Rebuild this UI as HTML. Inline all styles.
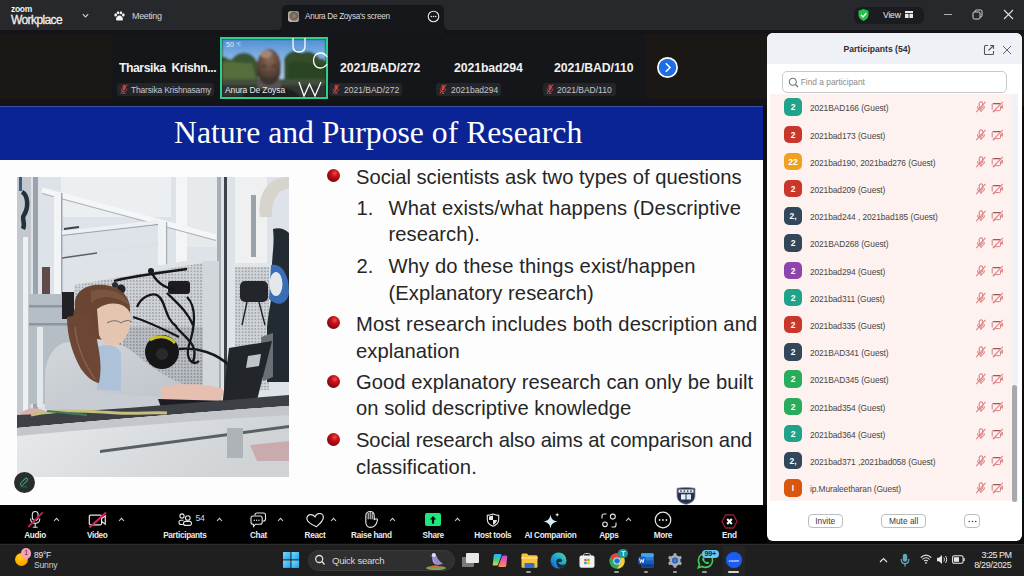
<!DOCTYPE html>
<html><head><meta charset="utf-8">
<style>
*{margin:0;padding:0;box-sizing:border-box}
html,body{width:1024px;height:576px;overflow:hidden;background:#0c0c0c;font-family:"Liberation Sans",sans-serif}
.a{position:absolute}
.nw{white-space:nowrap}
</style></head>
<body>
<!-- top bar -->
<div class="a" style="left:0;top:0;width:1024px;height:30px;background:#27282c"></div>
<div class="a" style="left:0;top:30px;width:1024px;height:5px;background:#141418"></div>
<!-- strip -->
<div class="a" style="left:0;top:34px;width:1024px;height:72px;background:#1b1714"></div>
<div class="a" style="left:112px;top:34px;width:534px;height:72px;background:#15161a"></div>
<div class="a" style="left:0;top:99px;width:767px;height:7px;background:#131417"></div>


<!-- top bar content -->
<div class="a nw" style="left:11px;top:4px;font-size:8.5px;font-weight:bold;color:#f2f2f2;letter-spacing:-0.3px">zoom</div>
<div class="a nw" style="left:11px;top:13px;font-size:12px;color:#f0f0f0;letter-spacing:-0.6px;-webkit-text-stroke:0.3px #f0f0f0">Workplace</div>
<svg class="a" style="left:81px;top:12px" width="9" height="8" viewBox="0 0 9 8"><path d="M1.8 2.2 L4.5 4.9 L7.2 2.2" stroke="#d0d0d0" stroke-width="1.1" fill="none"/></svg>
<svg class="a" style="left:114px;top:10.5px" width="11" height="10.5" viewBox="0 0 13 12"><g fill="#f4f4f4"><ellipse cx="2" cy="4.5" rx="1.6" ry="1.9"/><ellipse cx="4.8" cy="1.9" rx="1.5" ry="1.8"/><ellipse cx="8.2" cy="1.9" rx="1.5" ry="1.8"/><ellipse cx="11" cy="4.5" rx="1.6" ry="1.9"/><path d="M6.5 5 C9 5 11 8 10.5 10 C10 11.5 8 11 6.5 11 C5 11 3 11.5 2.5 10 C2 8 4 5 6.5 5Z"/></g></svg>
<div class="a nw" style="left:132px;top:11px;font-size:9px;color:#d6d6d6;letter-spacing:-0.35px">Meeting</div>
<!-- tab -->
<div class="a" style="left:282px;top:5px;width:162px;height:30px;background:#16171a;border-radius:5px 5px 0 0"></div>
<div class="a" style="left:276px;top:24px;width:6px;height:6px;background:radial-gradient(circle at 0 0,#27282c 6px,#16171a 6.5px)"></div>
<div class="a" style="left:444px;top:24px;width:6px;height:6px;background:radial-gradient(circle at 100% 0,#27282c 6px,#16171a 6.5px)"></div>
<div class="a" style="left:288px;top:11px;width:11px;height:11px;border-radius:3px;background:radial-gradient(circle at 55% 45%,#9b8a7c 0,#6b5d52 40%,#cfc6bd 75%)"></div>
<div class="a nw" style="left:305px;top:12px;font-size:8.2px;color:#dcdcdc;letter-spacing:-0.3px">Anura De Zoysa's screen</div>
<svg class="a" style="left:427px;top:10px" width="13" height="13" viewBox="0 0 13 13"><circle cx="6.5" cy="6.5" r="5.3" stroke="#e6e6e6" stroke-width="1.1" fill="none"/><circle cx="4.3" cy="6.5" r=".8" fill="#e6e6e6"/><circle cx="6.5" cy="6.5" r=".8" fill="#e6e6e6"/><circle cx="8.7" cy="6.5" r=".8" fill="#e6e6e6"/></svg>
<!-- view pill -->
<div class="a" style="left:854px;top:7px;width:70px;height:17px;border-radius:6px;background:#1b1c1f"></div>
<svg class="a" style="left:857px;top:8px" width="13" height="14" viewBox="0 0 13 14"><path d="M6.5 1 L11.5 2.8 L11.5 7 C11.5 10 9 12 6.5 13 C4 12 1.5 10 1.5 7 L1.5 2.8Z" fill="#22c147"/><path d="M4 7 L6 9 L9.2 5.2" stroke="#fff" stroke-width="1.4" fill="none"/></svg>
<div class="a nw" style="left:883px;top:10px;font-size:8.6px;color:#e8e8e8;letter-spacing:-0.2px">View</div>
<svg class="a" style="left:905px;top:11px" width="8" height="7" viewBox="0 0 8 7"><rect x="0" y="0" width="8" height="7" fill="#e8e8e8"/><rect x="0" y="2" width="8" height=".8" fill="#1b1c1f"/><rect x="3.6" y="2" width=".8" height="5" fill="#1b1c1f"/></svg>
<div class="a" style="left:943.5px;top:14px;width:8px;height:1px;background:#b0b0b0"></div>
<svg class="a" style="left:972px;top:9px" width="11" height="11" viewBox="0 0 11 11"><rect x="1" y="3" width="7" height="7" rx="1.2" stroke="#d8d8d8" stroke-width="1" fill="none"/><path d="M3 3 V2.2 C3 1.5 3.5 1 4.2 1 H8.8 C9.5 1 10 1.5 10 2.2 V6.8 C10 7.5 9.5 8 8.8 8 H8" stroke="#d8d8d8" stroke-width="1" fill="none"/></svg>
<svg class="a" style="left:1003px;top:9px" width="11" height="11" viewBox="0 0 11 11"><path d="M1 1 L10 10 M10 1 L1 10" stroke="#e0e0e0" stroke-width="1.1"/></svg>


<!-- strip content -->
<div class="a nw" style="left:119px;top:61px;font-size:12.3px;font-weight:bold;color:#f0f0f0;letter-spacing:-0.5px">Tharsika&nbsp; Krishn...</div>
<div class="a" style="left:117px;top:83px;width:97px;height:13px;border-radius:3px;background:#242528"></div>
<svg class="a" style="left:120px;top:84px" width="8" height="10" viewBox="0 0 8 10"><rect x="2.5" y="0.5" width="3" height="5.5" rx="1.5" fill="#c03a3a"/><path d="M1.2 4.5 C1.2 6.8 2.5 7.8 4 7.8 C5.5 7.8 6.8 6.8 6.8 4.5 M4 7.8 V9.5 M2.5 9.5 H5.5" stroke="#c03a3a" stroke-width=".9" fill="none"/><path d="M7 0.5 L1 9.5" stroke="#e05050" stroke-width="1"/></svg>
<div class="a nw" style="left:131px;top:85px;font-size:8.5px;color:#c8c8c8;letter-spacing:-0.2px">Tharsika Krishnasamy</div>

<div class="a nw" style="left:340px;top:61px;font-size:12.3px;font-weight:bold;color:#f0f0f0;letter-spacing:-0.1px">2021/BAD/272</div>
<div class="a" style="left:329px;top:83px;width:73px;height:13px;border-radius:3px;background:#242528"></div>
<svg class="a" style="left:332px;top:84px" width="8" height="10" viewBox="0 0 8 10"><rect x="2.5" y="0.5" width="3" height="5.5" rx="1.5" fill="#c03a3a"/><path d="M1.2 4.5 C1.2 6.8 2.5 7.8 4 7.8 C5.5 7.8 6.8 6.8 6.8 4.5 M4 7.8 V9.5 M2.5 9.5 H5.5" stroke="#c03a3a" stroke-width=".9" fill="none"/><path d="M7 0.5 L1 9.5" stroke="#e05050" stroke-width="1"/></svg>
<div class="a nw" style="left:344px;top:85px;font-size:8.5px;color:#c8c8c8">2021/BAD/272</div>

<div class="a nw" style="left:454px;top:61px;font-size:12.3px;font-weight:bold;color:#f0f0f0;letter-spacing:-0.1px">2021bad294</div>
<div class="a" style="left:436px;top:83px;width:65px;height:13px;border-radius:3px;background:#242528"></div>
<svg class="a" style="left:439px;top:84px" width="8" height="10" viewBox="0 0 8 10"><rect x="2.5" y="0.5" width="3" height="5.5" rx="1.5" fill="#c03a3a"/><path d="M1.2 4.5 C1.2 6.8 2.5 7.8 4 7.8 C5.5 7.8 6.8 6.8 6.8 4.5 M4 7.8 V9.5 M2.5 9.5 H5.5" stroke="#c03a3a" stroke-width=".9" fill="none"/><path d="M7 0.5 L1 9.5" stroke="#e05050" stroke-width="1"/></svg>
<div class="a nw" style="left:451px;top:85px;font-size:8.5px;color:#c8c8c8">2021bad294</div>

<div class="a nw" style="left:554px;top:61px;font-size:12.3px;font-weight:bold;color:#f0f0f0;letter-spacing:-0.1px">2021/BAD/110</div>
<div class="a" style="left:543px;top:83px;width:73px;height:13px;border-radius:3px;background:#242528"></div>
<svg class="a" style="left:546px;top:84px" width="8" height="10" viewBox="0 0 8 10"><rect x="2.5" y="0.5" width="3" height="5.5" rx="1.5" fill="#c03a3a"/><path d="M1.2 4.5 C1.2 6.8 2.5 7.8 4 7.8 C5.5 7.8 6.8 6.8 6.8 4.5 M4 7.8 V9.5 M2.5 9.5 H5.5" stroke="#c03a3a" stroke-width=".9" fill="none"/><path d="M7 0.5 L1 9.5" stroke="#e05050" stroke-width="1"/></svg>
<div class="a nw" style="left:557px;top:85px;font-size:8.5px;color:#c8c8c8">2021/BAD/110</div>

<svg class="a" style="left:656px;top:56px" width="23" height="23" viewBox="0 0 23 23"><circle cx="11.5" cy="11.5" r="10.5" fill="#fff"/><circle cx="11.5" cy="11.5" r="8.8" fill="#1b6fe6"/><path d="M9.8 7.2 L14 11.5 L9.8 15.8" stroke="#fff" stroke-width="1.6" fill="none"/></svg>

<!-- video thumb -->
<div class="a" style="left:220px;top:37px;width:108px;height:62px;border:2px solid #2ecf8a;background:#16181b"></div>
<svg class="a" style="left:222px;top:39px" width="104" height="58" viewBox="0 0 104 58">
 <defs><linearGradient id="sky" x1="0" y1="0" x2="0" y2="1"><stop offset="0" stop-color="#4f8fd6"/><stop offset=".45" stop-color="#9cc2e8"/><stop offset="1" stop-color="#d5dde2"/></linearGradient>
 <filter id="tb"><feGaussianBlur stdDeviation="0.8"/></filter>
 <radialGradient id="head" cx=".5" cy=".3" r=".7"><stop offset="0" stop-color="#8a6a5a"/><stop offset=".6" stop-color="#5e4538"/><stop offset="1" stop-color="#3e2e28"/></radialGradient></defs>
 <g filter="url(#tb)">
 <rect width="104" height="58" fill="url(#sky)"/>
 <path d="M0 18 C4 16 6 22 10 20 C16 12 26 12 32 18 L36 24 L36 58 H0Z" fill="#3b5530"/>
 <path d="M62 20 C66 12 74 10 80 14 C86 10 94 14 98 20 C102 18 104 22 104 24 V58 H62Z" fill="#344d2a"/>
 <path d="M0 24 C10 20 20 26 30 24 L34 40 H0Z" fill="#546e3a"/>
 <path d="M66 24 C76 20 90 26 104 26 V44 H66Z" fill="#2c4424"/>
 <path d="M0 40 H104 V58 H0Z" fill="#43503c"/>
 <path d="M0 46 H104 V58 H0Z" fill="#2f3530"/>
 <ellipse cx="47" cy="27" rx="12" ry="17" fill="url(#head)"/>
 <ellipse cx="44" cy="15" rx="6" ry="4" fill="#b89a88" opacity=".7"/>
 <path d="M35 30 C35 40 40 47 47 47 C54 47 59 40 59 30 C57 37 52 39 47 39 C42 39 37 37 35 30Z" fill="#3a3432"/>
 <path d="M37 38 C40 49 54 49 57 38 L59 48 C55 55 39 55 35 48Z" fill="#5a5552"/>
 <path d="M40 27 H45 M49 27 H54" stroke="#2a2220" stroke-width="1.2"/>
 <path d="M20 58 C24 50 34 48 40 50 L54 50 C62 48 72 50 78 58Z" fill="#1d1e22"/>
 </g>
</svg>
<div class="a nw" style="left:226px;top:41px;font-size:7px;color:#e8eef6">50 <span style="font-size:5px;vertical-align:top">&#8451;</span></div>
<div class="a nw" style="left:225px;top:85px;font-size:8.5px;color:#eaeaea;letter-spacing:-0.1px">Anura De Zoysa</div>
<svg class="a" style="left:288px;top:36px" width="42" height="62" viewBox="0 0 42 62">
 <path d="M5 2 V10 C5 14.5 7.5 16 11 16 C14.5 16 17 14.5 17 10 V2" stroke="#fff" stroke-width="1.3" fill="none"/>
 <path d="M39 21 C37 17.5 35 17 32.5 17 C28.5 17 25.5 20 25.5 24.5 C25.5 29 28.5 32 32.5 32 C35 32 37 31 39 28" stroke="#fff" stroke-width="1.3" fill="none"/>
 <path d="M11 46 L16 60 L21.5 48 L27 60 L33 46" stroke="#fff" stroke-width="1.3" fill="none"/>
</svg>

<!-- slide -->
<div id="slide" class="a" style="left:0;top:106px;width:763px;height:399px;background:#fdfdfd;overflow:hidden">
  <div class="a" style="left:0;top:0;width:763px;height:54px;background:#0a2496"></div>
<div class="a" style="left:0;top:0;width:763px;height:1px;background:#3f4fa6"></div>
<div class="a nw" style="left:174px;top:9px;font-family:'Liberation Serif',serif;font-size:31.7px;color:#fff;line-height:36px">Nature and Purpose of Research</div>
<svg id="photo" class="a" style="left:17px;top:71px" width="272" height="300" viewBox="0 0 272 300">
<defs>
<filter id="bl" x="-2%" y="-2%" width="104%" height="104%"><feGaussianBlur stdDeviation="0.7"/></filter>
<pattern id="peg" width="3.2" height="3.2" patternUnits="userSpaceOnUse"><rect width="3.2" height="3.2" fill="#cfd3d7"/><circle cx="1.6" cy="1.6" r=".8" fill="#8f949a"/></pattern>
<pattern id="peg2" width="3.2" height="3.2" patternUnits="userSpaceOnUse"><rect width="3.2" height="3.2" fill="#b9bdc2"/><circle cx="1.6" cy="1.6" r=".8" fill="#7c8187"/></pattern>
<linearGradient id="floor" x1="0" y1="0" x2="1" y2=".3"><stop offset="0" stop-color="#e9ebed"/><stop offset=".5" stop-color="#dcdfe2"/><stop offset="1" stop-color="#cfd3d6"/></linearGradient>
<linearGradient id="shirt" x1="0" y1="0" x2="1" y2="1"><stop offset="0" stop-color="#d3d7dc"/><stop offset="1" stop-color="#bdc2c8"/></linearGradient>
</defs>
<g filter="url(#bl)">
<rect width="272" height="300" fill="#dde3e8"/>
<rect x="44" y="0" width="110" height="40" fill="#eceff2"/>
<rect x="159" y="0" width="11" height="88" fill="#f3f5f6"/>
<rect x="170" y="0" width="30" height="70" fill="#e6eaed"/>
<!-- left dark items -->
<rect x="0" y="0" width="14" height="300" fill="#c3c9cf"/>
<path d="M5 15 C11 18 12 30 7 38 C4 42 9 46 6 52" stroke="#24303a" stroke-width="4.5" fill="none"/>
<rect x="2" y="0" width="3" height="14" fill="#3d5a7a"/>
<rect x="16" y="0" width="5" height="240" fill="#9ba4ac"/>
<rect x="6" y="60" width="5" height="175" fill="#eef0f2"/>
<!-- framework box -->
<path d="M25 13 L199 60" stroke="#f4f6f7" stroke-width="5"/>
<path d="M25 16.5 L199 63.5" stroke="#a9b0b6" stroke-width="1"/>
<rect x="37" y="16" width="7" height="102" fill="#f2f4f5"/>
<rect x="44" y="16" width="1.5" height="102" fill="#9ea6ad"/>
<path d="M45 56 L141 45" stroke="#edf0f2" stroke-width="4"/>
<path d="M45 58.5 L141 47.5" stroke="#9ba2a9" stroke-width="1"/>
<path d="M45 80 L141 67" stroke="#dde1e4" stroke-width="3"/>
<path d="M45 81 L80 76" stroke="#5a6168" stroke-width="1.3"/>
<path d="M47 52 L62 50" stroke="#3a4047" stroke-width="2"/>
<rect x="141" y="45" width="8" height="43" fill="#f0f2f4"/>
<rect x="149" y="45" width="1.2" height="43" fill="#a5acb3"/>
<rect x="25" y="90" width="8" height="27" fill="#5e4a48"/>
<!-- right posts -->
<rect x="200" y="0" width="4" height="240" fill="#a7aeb4"/>
<rect x="207" y="0" width="3" height="240" fill="#3c4248"/>
<rect x="218" y="0" width="32" height="88" fill="#eef0f2"/>
<rect x="234" y="18" width="5" height="62" fill="#9aa2aa"/>
<path d="M243 40 C240 18 250 2 268 0 L272 0 L272 12 C262 12 254 22 255 40Z" fill="#d6d4cc"/>
<!-- left grey panel -->
<rect x="12" y="117" width="45" height="110" fill="#b5bdc5"/>
<rect x="12" y="128" width="45" height="2.5" fill="#8c96a0"/>
<rect x="12" y="146" width="45" height="2.5" fill="#8c96a0"/>
<rect x="45" y="115" width="12" height="27" fill="#202427"/>
<rect x="20" y="150" width="6" height="80" fill="#e4e8eb"/>
<!-- center pegboard -->
<path d="M57 106 L191 82 L191 210 L57 214Z" fill="url(#peg)"/>
<path d="M57 103 L191 80 L191 85 L57 108Z" fill="#dfe3e6"/>
<rect x="186" y="84" width="16" height="130" fill="#d2d7db"/>
<rect x="106" y="150" width="80" height="58" fill="url(#peg2)"/>
<!-- right pegboard -->
<rect x="218" y="88" width="34" height="125" fill="url(#peg)"/>
<rect x="216" y="86" width="38" height="4" fill="#e2e5e8"/>
<!-- cables / devices -->
<rect x="151" y="104" width="22" height="13" rx="3" fill="#1c1e21"/>
<circle cx="104" cy="112" r="4.5" fill="#222427"/>
<circle cx="98" cy="108" r="3" fill="#2a2c2f"/>
<path d="M97 104 C110 100 140 96 170 92 M134 94 C138 104 148 112 158 112 M150 116 C160 126 170 134 176 148 M120 130 C124 120 134 116 140 118 C150 124 146 140 160 150 M170 120 C180 130 178 150 172 168 C168 182 176 190 182 184 M116 140 C130 144 146 152 162 160" stroke="#141619" stroke-width="2.3" fill="none"/>
<circle cx="134" cy="94" r="3" fill="#1a1c1f"/>
<rect x="223" y="104" width="28" height="21" rx="5" fill="#24272a"/>
<path d="M230 125 L225 148 M242 125 L248 148" stroke="#222" stroke-width="1.4"/>
<!-- speaker -->
<circle cx="145" cy="175" r="17" fill="#131517"/>
<path d="M133 163 C141 158 152 159 158 166" stroke="#c9c22c" stroke-width="3" fill="none"/>
<circle cx="145" cy="177" r="6" fill="#2a2c2f"/>
<path d="M159 150 C170 162 182 168 176 185 M162 172 C180 170 200 176 214 190" stroke="#15171a" stroke-width="2.4" fill="none"/>
<!-- robot -->
<path d="M256 52 C262 50 268 52 272 56 L272 205 L250 205 L250 150 C252 130 256 120 255 100 C254 80 258 70 256 52Z" fill="#232a31"/>
<path d="M244 160 L256 156 L256 200 L246 204Z" fill="#6a7076"/>
<path d="M254 88 C264 86 272 96 272 116 C270 128 260 130 252 122Z" fill="#3b6cb6"/>
<ellipse cx="259" cy="107" rx="6.5" ry="12" fill="#e3e8ed"/>
</g>
<g filter="url(#bl)">
<!-- hair -->
<path d="M58 130 C56 114 70 106 88 108 C104 110 114 120 113 134 L106 160 C100 178 92 196 84 204 C74 200 66 188 60 176 C54 160 54 144 58 130Z" fill="#6a4532"/>
<!-- shirt -->
<path d="M28 200 C28 184 34 172 46 166 L74 162 C94 162 108 168 120 178 C138 194 156 204 174 210 L176 226 L140 230 L96 234 L40 234 L28 232Z" fill="url(#shirt)"/>
<path d="M50 214 C80 216 110 218 144 220 L146 234 L50 234Z" fill="#c8cdd3"/>
<path d="M80 170 C90 166 100 168 104 176 L104 214 L80 213Z" fill="#adc2d9"/>
<!-- hair strand over shirt -->
<path d="M50 140 C50 160 56 178 64 192 C70 200 76 205 82 206 C84 196 84 186 82 174 C80 160 76 148 72 136Z" fill="#6d4734"/>
<path d="M58 150 C60 170 68 188 78 202" stroke="#8a6048" stroke-width="1.5" fill="none"/>
<!-- face -->
<path d="M80 132 C90 124 108 124 113 136 C115 146 112 158 104 166 C96 171 86 168 82 158Z" fill="#e5c5b0"/>
<path d="M90 146 C95 143 100 143 104 146 C108 143 112 143 115 145" stroke="#6a6a6a" stroke-width="1" fill="none"/>
<path d="M74 114 C90 110 106 114 113 128 L100 122 C90 118 80 120 74 126Z" fill="#7a5540"/>
<!-- hands -->
<path d="M143 210 C160 206 190 206 206 212 C208 220 202 226 194 226 L146 226Z" fill="#e6bfb1"/>
<path d="M4 236 C10 230 20 230 28 234 L24 242 L4 244Z" fill="#dcb0a6"/>
<!-- laptop -->
<path d="M212 171 L255 164 L239 227 L205 230Z" fill="#24272b"/>
<path d="M231 179 L244 177 L242 189 L229 191Z" fill="#bfc4ca"/>
<path d="M141 222 L212 224 L238 228 L146 236Z" fill="#1c1e21"/>
<!-- table -->
<path d="M0 238 C80 234 170 226 272 218 L272 229 C170 236 80 244 0 251Z" fill="#3c3f44"/>
<path d="M14 238 C40 232 70 234 100 236 C120 237 138 235 150 236" stroke="#c5bf80" stroke-width="3" fill="none"/>
<path d="M30 234 L70 238" stroke="#3f7a5a" stroke-width="2"/>
<path d="M0 251 C80 244 170 236 272 229 L272 300 L0 300Z" fill="url(#floor)"/>
<path d="M0 251 C80 244 170 236 272 229 L272 238 C170 244 80 252 0 259Z" fill="#c3c7cb"/>
<path d="M83 273 L272 248 L272 251 L83 276Z" fill="#5a5f64"/>
<rect x="210" y="251" width="16" height="30" fill="#aeb3b8"/>
<path d="M233 268 L272 264 L272 284 L240 284Z" fill="#c9abae"/>
</g>
</svg>
<div style="color:#262626">
<div class="a" style="left:327px;top:63.0px;width:13px;height:13px;border-radius:50%;background:radial-gradient(circle at 60% 32%,#f04a4a 0,#c81018 30%,#8a0812 65%,#4a0006 100%)"></div>
<div class="a nw" style="left:356px;top:59.8px;font-size:20.2px;line-height:23.2px;letter-spacing:-0.01px">Social scientists ask two types of questions</div>
<div class="a nw" style="left:356.5px;top:91.1px;font-size:20.2px;line-height:23.2px;letter-spacing:0.05px">1.</div>
<div class="a nw" style="left:388.5px;top:91.1px;font-size:20.2px;line-height:23.2px;letter-spacing:0.13px">What exists/what happens (Descriptive</div>
<div class="a nw" style="left:388.5px;top:117.4px;font-size:20.2px;line-height:23.2px;letter-spacing:0.05px">research).</div>
<div class="a nw" style="left:356.5px;top:149.1px;font-size:20.2px;line-height:23.2px;letter-spacing:0.05px">2.</div>
<div class="a nw" style="left:388.5px;top:149.1px;font-size:20.2px;line-height:23.2px;letter-spacing:0.13px">Why do these things exist/happen</div>
<div class="a nw" style="left:388.5px;top:176.1px;font-size:20.2px;line-height:23.2px;letter-spacing:0.05px">(Explanatory research)</div>
<div class="a" style="left:327px;top:210.2px;width:13px;height:13px;border-radius:50%;background:radial-gradient(circle at 60% 32%,#f04a4a 0,#c81018 30%,#8a0812 65%,#4a0006 100%)"></div>
<div class="a nw" style="left:356px;top:206.9px;font-size:20.2px;line-height:23.2px;letter-spacing:0.15px">Most research includes both description and</div>
<div class="a nw" style="left:356px;top:233.9px;font-size:20.2px;line-height:23.2px;letter-spacing:0.05px">explanation</div>
<div class="a" style="left:327px;top:269.0px;width:13px;height:13px;border-radius:50%;background:radial-gradient(circle at 60% 32%,#f04a4a 0,#c81018 30%,#8a0812 65%,#4a0006 100%)"></div>
<div class="a nw" style="left:356px;top:264.5px;font-size:20.2px;line-height:23.2px;letter-spacing:0.05px">Good explanatory research can only be built</div>
<div class="a nw" style="left:356px;top:290.5px;font-size:20.2px;line-height:23.2px;letter-spacing:0.05px">on solid descriptive knowledge</div>
<div class="a" style="left:327px;top:326.5px;width:13px;height:13px;border-radius:50%;background:radial-gradient(circle at 60% 32%,#f04a4a 0,#c81018 30%,#8a0812 65%,#4a0006 100%)"></div>
<div class="a nw" style="left:356px;top:323.4px;font-size:20.2px;line-height:23.2px;letter-spacing:-0.13px">Social research also aims at comparison and</div>
<div class="a nw" style="left:356px;top:349.6px;font-size:20.2px;line-height:23.2px;letter-spacing:0.05px">classification.</div>
</div>
</div>
<div class="a" style="left:763px;top:106px;width:4px;height:399px;background:#101010"></div>

<!-- toolbar -->
<div class="a" style="left:0;top:505px;width:767px;height:38px;background:#000"></div>
<!-- toolbar content -->
<svg class="a" style="left:26px;top:510px" width="19" height="19" viewBox="0 0 19 19"><rect x="6.3" y="1.5" width="5.8" height="9" rx="2.9" stroke="#e0e0e0" stroke-width="1.1" fill="none"/><path d="M4.6 8.5 C4.6 11.8 6.6 13.4 9.2 13.4 C11.8 13.4 13.8 11.8 13.8 8.5 M9.2 13.4 V17 M6.8 17.2 H11.6" stroke="#e0e0e0" stroke-width="1.1" fill="none"/><path d="M2.2 17 L16.8 2.4" stroke="#c8205a" stroke-width="1.8"/></svg>
<svg class="a" style="left:52.7px;top:516.5px" width="7" height="5" viewBox="0 0 7 5"><path d="M1 4 L3.5 1.3 L6 4" stroke="#cfcfcf" stroke-width="1.1" fill="none"/></svg>
<div class="a nw" style="left:-5px;top:531px;width:80px;text-align:center;font-size:8.2px;line-height:10px;font-weight:bold;color:#ececec;letter-spacing:-0.3px">Audio</div>
<svg class="a" style="left:88px;top:511px" width="19" height="18" viewBox="0 0 19 18"><rect x="1.3" y="4.1" width="12.3" height="9.7" rx="1.2" stroke="#e6e6e6" stroke-width="1.2" fill="none"/><path d="M13.6 7.5 L17.3 5 V13 L13.6 10.5" stroke="#e6e6e6" stroke-width="1.2" fill="none"/><path d="M1.5 16.5 L18 1.5" stroke="#d6245c" stroke-width="2"/></svg>
<svg class="a" style="left:118.2px;top:516.5px" width="7" height="5" viewBox="0 0 7 5"><path d="M1 4 L3.5 1.3 L6 4" stroke="#cfcfcf" stroke-width="1.1" fill="none"/></svg>
<div class="a nw" style="left:57.25px;top:531px;width:80px;text-align:center;font-size:8.2px;line-height:10px;font-weight:bold;color:#ececec;letter-spacing:-0.3px">Video</div>
<svg class="a" style="left:177.5px;top:512.5px" width="14" height="13" viewBox="0 0 14 13"><circle cx="4" cy="3" r="2.1" stroke="#e6e6e6" stroke-width="1.1" fill="none"/><circle cx="9.8" cy="5" r="2.3" stroke="#e6e6e6" stroke-width="1.1" fill="none"/><path d="M5.5 7.2 H3 C1.8 7.2 1 8 1 9.2 C1 10.5 1.8 11.5 3 11.5 H5.5" stroke="#e6e6e6" stroke-width="1.1" fill="none"/><rect x="5.5" y="8.4" width="8" height="4" rx="2" stroke="#e6e6e6" stroke-width="1.1" fill="none"/></svg>
<div class="a nw" style="left:195.5px;top:513px;font-size:8.6px;line-height:10px;color:#dadada;letter-spacing:-0.2px">54</div>
<svg class="a" style="left:216.3px;top:516.5px" width="7" height="5" viewBox="0 0 7 5"><path d="M1 4 L3.5 1.3 L6 4" stroke="#cfcfcf" stroke-width="1.1" fill="none"/></svg>
<div class="a nw" style="left:144.85px;top:531px;width:80px;text-align:center;font-size:8.2px;line-height:10px;font-weight:bold;color:#ececec;letter-spacing:-0.3px">Participants</div>
<svg class="a" style="left:250px;top:511.5px" width="17" height="16" viewBox="0 0 17 16"><path d="M5 3.5 V3 C5 1.9 5.9 1 7 1 H13.5 C14.6 1 15.5 1.9 15.5 3 V7 C15.5 8.1 14.6 9 13.5 9 H12.5" stroke="#e6e6e6" stroke-width="1.1" fill="none"/><path d="M3 4 H10.2 C11.3 4 12.2 4.9 12.2 6 V10.2 C12.2 11.3 11.3 12.2 10.2 12.2 H5.5 L3.5 14.5 V12.2 H3 C1.9 12.2 1 11.3 1 10.2 V6 C1 4.9 1.9 4 3 4Z" stroke="#e6e6e6" stroke-width="1.1" fill="none"/><circle cx="4.3" cy="8.2" r=".7" fill="#e6e6e6"/><circle cx="6.6" cy="8.2" r=".7" fill="#e6e6e6"/><circle cx="8.9" cy="8.2" r=".7" fill="#e6e6e6"/></svg>
<svg class="a" style="left:276.9px;top:516.5px" width="7" height="5" viewBox="0 0 7 5"><path d="M1 4 L3.5 1.3 L6 4" stroke="#cfcfcf" stroke-width="1.1" fill="none"/></svg>
<div class="a nw" style="left:218.39999999999998px;top:531px;width:80px;text-align:center;font-size:8.2px;line-height:10px;font-weight:bold;color:#ececec;letter-spacing:-0.3px">Chat</div>
<svg class="a" style="left:306px;top:512.5px" width="19" height="15" viewBox="0 0 19 15"><path d="M9.5 13.8 C6 11.5 1.2 8.5 1.2 4.8 C1.2 2.6 3 1 5 1 C7 1 8.5 2.2 9.5 3.8 C10.5 2.2 12 1 14 1 C16 1 17.8 2.6 17.8 4.8 C17.8 8.5 13 11.5 9.5 13.8Z" stroke="#e6e6e6" stroke-width="1.2" fill="none" transform="rotate(-8 9.5 7.5)"/></svg>
<svg class="a" style="left:330.3px;top:516.5px" width="7" height="5" viewBox="0 0 7 5"><path d="M1 4 L3.5 1.3 L6 4" stroke="#cfcfcf" stroke-width="1.1" fill="none"/></svg>
<div class="a nw" style="left:275px;top:531px;width:80px;text-align:center;font-size:8.2px;line-height:10px;font-weight:bold;color:#ececec;letter-spacing:-0.3px">React</div>
<svg class="a" style="left:360px;top:508px" width="24" height="22" viewBox="0 0 24 22"><path d="M5.8 13.5 V7.8 C5.8 5.2 7.8 3.5 10.2 3.5 C12.6 3.5 14.2 5.2 14.2 7.8 V11.6 L15.4 10.9 C16.4 10.4 17.6 11 17.4 12.3 C17.1 14.6 16.1 16.6 14.6 17.9 C13.4 18.9 11.9 19.3 10.3 19.3 C7.6 19.3 5.8 17 5.8 14Z" stroke="#e6e6e6" stroke-width="1.15" fill="none" stroke-linejoin="round"/><path d="M8.2 5 V11.3 M10.2 4 V11.3 M12.2 5 V11.3" stroke="#e6e6e6" stroke-width="1"/></svg>
<svg class="a" style="left:388.8px;top:516.5px" width="7" height="5" viewBox="0 0 7 5"><path d="M1 4 L3.5 1.3 L6 4" stroke="#cfcfcf" stroke-width="1.1" fill="none"/></svg>
<div class="a nw" style="left:331.45px;top:531px;width:80px;text-align:center;font-size:8.2px;line-height:10px;font-weight:bold;color:#ececec;letter-spacing:-0.3px">Raise hand</div>
<div class="a" style="left:424.5px;top:513px;width:16.8px;height:13px;border-radius:2px;background:#1ee77b"></div>
<svg class="a" style="left:428px;top:515px" width="10" height="10" viewBox="0 0 10 10"><path d="M5 1 L1.8 4.6 H3.9 V8.8 H6.1 V4.6 H8.2Z" fill="#0a0a0a"/></svg>
<svg class="a" style="left:454.2px;top:516.5px" width="7" height="5" viewBox="0 0 7 5"><path d="M1 4 L3.5 1.3 L6 4" stroke="#cfcfcf" stroke-width="1.1" fill="none"/></svg>
<div class="a nw" style="left:393.25px;top:531px;width:80px;text-align:center;font-size:8.2px;line-height:10px;font-weight:bold;color:#ececec;letter-spacing:-0.3px">Share</div>
<svg class="a" style="left:486px;top:512.5px" width="14" height="14" viewBox="0 0 14 14"><path d="M7 .9 C9 1.6 11 2.2 12.7 2.4 V6.6 C12.7 9.8 10.5 12 7 13.3 C3.5 12 1.3 9.8 1.3 6.6 V2.4 C3 2.2 5 1.6 7 .9Z" stroke="#e6e6e6" stroke-width="1.1" fill="none"/><path d="M7 2.6 V7 H3 V3.4 C4.4 3.2 5.7 2.9 7 2.6Z M7 7 H11 C10.8 9.3 9.3 10.8 7 11.7Z" fill="#e6e6e6"/></svg>
<div class="a nw" style="left:452.85px;top:531px;width:80px;text-align:center;font-size:8.2px;line-height:10px;font-weight:bold;color:#ececec;letter-spacing:-0.3px">Host tools</div>
<svg class="a" style="left:541.5px;top:511.5px" width="19" height="17" viewBox="0 0 19 17"><path d="M8.5 2.5 C9.2 7 11 8.8 16 9.6 C11 10.4 9.2 12.2 8.5 16.5 C7.8 12.2 6 10.4 1 9.6 C6 8.8 7.8 7 8.5 2.5Z" fill="#d2ecf7"/><path d="M15.2 .6 C15.4 2 16 2.6 17.4 2.8 C16 3 15.4 3.6 15.2 5 C15 3.6 14.4 3 13 2.8 C14.4 2.6 15 2 15.2 .6Z" fill="#f2f2f2"/></svg>
<div class="a nw" style="left:510.45000000000005px;top:531px;width:80px;text-align:center;font-size:8.2px;line-height:10px;font-weight:bold;color:#ececec;letter-spacing:-0.3px">AI Companion</div>
<svg class="a" style="left:600.5px;top:512.5px" width="16" height="15" viewBox="0 0 16 15"><path d="M1 5.5 V3 C1 1.9 1.9 1 3 1 H5.5 M15 9.5 V12 C15 13.1 14.1 14 13 14 H10.5" stroke="#e6e6e6" stroke-width="1.1" fill="none"/><circle cx="11.8" cy="3.6" r="2.5" stroke="#e6e6e6" stroke-width="1.1" fill="none"/><circle cx="4" cy="11.3" r="2.3" stroke="#e6e6e6" stroke-width="1.1" fill="none"/></svg>
<svg class="a" style="left:624.6px;top:516.5px" width="7" height="5" viewBox="0 0 7 5"><path d="M1 4 L3.5 1.3 L6 4" stroke="#cfcfcf" stroke-width="1.1" fill="none"/></svg>
<div class="a nw" style="left:568.85px;top:531px;width:80px;text-align:center;font-size:8.2px;line-height:10px;font-weight:bold;color:#ececec;letter-spacing:-0.3px">Apps</div>
<svg class="a" style="left:654px;top:510.5px" width="18" height="18" viewBox="0 0 18 18"><circle cx="9" cy="9" r="7.8" stroke="#e6e6e6" stroke-width="1.2" fill="none"/><circle cx="5.6" cy="9" r=".9" fill="#e6e6e6"/><circle cx="9" cy="9" r=".9" fill="#e6e6e6"/><circle cx="12.4" cy="9" r=".9" fill="#e6e6e6"/></svg>
<div class="a nw" style="left:622.9px;top:531px;width:80px;text-align:center;font-size:8.2px;line-height:10px;font-weight:bold;color:#ececec;letter-spacing:-0.3px">More</div>
<svg class="a" style="left:721px;top:514px" width="17" height="15" viewBox="0 0 17 15"><path d="M4.6 1 H12.4 L16 7.5 L12.4 14 H4.6 L1 7.5Z" stroke="#9a1b31" stroke-width="1.3" fill="none"/><path d="M6.2 5 L10.8 10 M10.8 5 L6.2 10" stroke="#fff" stroke-width="2"/></svg>
<div class="a nw" style="left:689.35px;top:531px;width:80px;text-align:center;font-size:8.2px;line-height:10px;font-weight:bold;color:#ececec;letter-spacing:-0.3px">End</div>
<!-- taskbar -->
<div class="a" style="left:0;top:543px;width:1024px;height:33px;background:#1f1f1f"></div>
<div class="a" style="left:0;top:543px;width:1024px;height:1px;background:#0a0a0a"></div>
<div class="a" style="left:0;top:544px;width:1024px;height:1px;background:#2b2b2b"></div>

<!-- taskbar content -->
<div class="a" style="left:14.7px;top:552.8px;width:13.6px;height:13.6px;border-radius:50%;background:radial-gradient(circle at 40% 30%,#ffd21a 0,#ffb000 50%,#ff8a00 100%)"></div>
<div class="a" style="left:20.9px;top:548.4px;width:10.5px;height:10.5px;border-radius:50%;background:#f7a3b5;color:#5a1e2a;font-size:7px;line-height:10.5px;text-align:center">1</div>
<div class="a nw" style="left:34px;top:549.5px;font-size:8.6px;line-height:10px;color:#e6e6e6;letter-spacing:-0.3px">89°F</div>
<div class="a nw" style="left:34px;top:560px;font-size:8.6px;line-height:10px;color:#cfcfcf;letter-spacing:-0.2px">Sunny</div>
<svg class="a" style="left:282.7px;top:552.4px" width="16" height="16" viewBox="0 0 16 16"><defs><linearGradient id="wg" x1="0" y1="0" x2="1" y2="1"><stop offset="0" stop-color="#7fd6f7"/><stop offset="1" stop-color="#1aa7f0"/></linearGradient></defs><rect x="0" y="0" width="7.5" height="7.4" fill="url(#wg)"/><rect x="8.5" y="0" width="7.5" height="7.4" fill="url(#wg)"/><rect x="0" y="8.4" width="7.5" height="7.5" fill="url(#wg)"/><rect x="8.5" y="8.4" width="7.5" height="7.5" fill="url(#wg)"/></svg>
<div class="a" style="left:307.5px;top:549.5px;width:147px;height:21px;border-radius:11px;background:#2f2f2f;border:1px solid #3a3a3a"></div>
<svg class="a" style="left:314px;top:554px" width="12" height="12" viewBox="0 0 12 12"><circle cx="5.2" cy="5" r="3.5" stroke="#dedede" stroke-width="1.3" fill="none"/><path d="M7.8 7.6 L10.5 10.5" stroke="#dedede" stroke-width="1.4"/></svg>
<div class="a nw" style="left:332px;top:554.5px;font-size:9.6px;line-height:11px;color:#d8d8d8;letter-spacing:-0.3px">Quick search</div>
<svg class="a" style="left:424px;top:552px" width="24" height="18" viewBox="0 0 24 18"><ellipse cx="12" cy="16" rx="10" ry="2" fill="#8a9a5a"/><path d="M5 16 C7 13 13 12 17 16Z" fill="#d0702a"/><path d="M8 5 C8 2 11 1 12 3 C13 5 14 8 19 12 L14 13 C10 13 8 10 8 5Z" fill="#9a8ad0"/><path d="M9 7 C10 10 11 12 13 12 C11 12 9 10 9 7Z" fill="#f0f0f0"/><circle cx="9.8" cy="3" r="2" fill="#e8e0f0"/><path d="M7.8 3.2 L5.5 4 L7.8 4.5Z" fill="#e07030"/></svg>
<div class="a" style="left:462px;top:556.7px;width:11.7px;height:10.3px;background:#7a7a7a;border-radius:1px"></div>
<div class="a" style="left:466px;top:552.8px;width:12.6px;height:10.3px;background:#e8e8e8;border-radius:1px"></div>
<svg class="a" style="left:491.5px;top:552.5px" width="16" height="15" viewBox="0 0 16 15"><defs><linearGradient id="cpa" x1="0" y1="0" x2="0" y2="1"><stop offset="0" stop-color="#2fa8ff"/><stop offset=".5" stop-color="#3fd08a"/><stop offset="1" stop-color="#e8d040"/></linearGradient><linearGradient id="cpb" x1="0" y1="0" x2="0" y2="1"><stop offset="0" stop-color="#b050e0"/><stop offset=".5" stop-color="#f060a0"/><stop offset="1" stop-color="#ff8a50"/></linearGradient></defs><path d="M3.5 1 H8.5 C9.5 1 9.8 1.8 9.5 2.6 L6 11.5 C5.7 12.2 5 12.5 4.3 12.5 H2 C1 12.5 .5 11.8 .8 10.9 L1.8 2.2 C2 1.4 2.6 1 3.5 1Z" fill="url(#cpa)"/><path d="M12.5 14 H7.5 C6.5 14 6.2 13.2 6.5 12.4 L10 3.5 C10.3 2.8 11 2.5 11.7 2.5 H14 C15 2.5 15.5 3.2 15.2 4.1 L14.2 12.8 C14 13.6 13.4 14 12.5 14Z" fill="url(#cpb)"/></svg>
<svg class="a" style="left:520.5px;top:552.5px" width="17" height="15" viewBox="0 0 17 15"><path d="M0.5 2 C0.5 1.2 1.1 .6 1.9 .6 H6 L7.5 2.2 H15.2 C16 2.2 16.5 2.8 16.5 3.6 V13.5 C16.5 14.3 16 14.8 15.2 14.8 H1.9 C1.1 14.8 .5 14.3 .5 13.5Z" fill="#f7c442"/><rect x="0.5" y="4" width="16" height="2" fill="#ffd766"/><rect x="3.5" y="10" width="10" height="5" rx="1" fill="#2f6fc7"/></svg>
<div class="a" style="left:526.2px;top:571.3px;width:4.5px;height:1.7px;border-radius:1px;background:#9a9a9a"></div>
<svg class="a" style="left:549.5px;top:551.8px" width="17" height="17" viewBox="0 0 17 17"><defs><linearGradient id="eg2" x1="1" y1="0" x2="0" y2="1"><stop offset="0" stop-color="#5fe07a"/><stop offset=".35" stop-color="#26b7c8"/><stop offset=".7" stop-color="#1a86dc"/><stop offset="1" stop-color="#1556b8"/></linearGradient></defs><circle cx="8.5" cy="8.5" r="8" fill="url(#eg2)"/><path d="M6.3 9.5 C6.3 7.6 7.8 6.4 9.6 6.4 C11.2 6.4 12.3 7.4 12.3 8.6 C12.3 9.5 11.6 10 10.6 10 H8.2 C8.3 11.6 9.8 12.8 12 12.8 C13.6 12.8 15 12.2 16.1 11.2 C15.4 13.2 13.5 15.4 11 16 C8 16.3 6.3 12.5 6.3 9.5Z" fill="#1a1a1a" opacity=".85"/></svg>
<svg class="a" style="left:579px;top:552.7px" width="16" height="15" viewBox="0 0 16 15"><path d="M4.5 3 V2 C4.5 1 5.5 .5 8 .5 C10.5 .5 11.5 1 11.5 2 V3" stroke="#cfcfcf" stroke-width="1" fill="none"/><rect x="0.5" y="2.6" width="15" height="12.2" rx="2" fill="#f2f2f2"/><rect x="5.3" y="5.8" width="2.4" height="2.4" fill="#f25022"/><rect x="8.3" y="5.8" width="2.4" height="2.4" fill="#7fba00"/><rect x="5.3" y="8.8" width="2.4" height="2.4" fill="#00a4ef"/><rect x="8.3" y="8.8" width="2.4" height="2.4" fill="#ffb900"/></svg>
<svg class="a" style="left:608.8px;top:552.7px" width="16" height="16" viewBox="0 0 16 16"><circle cx="8" cy="8" r="7.7" fill="#3aa757"/><path d="M8 .3 A7.7 7.7 0 0 1 14.7 4.2 L8 4.2 Z" fill="#e94235"/><path d="M1.3 4.2 A7.7 7.7 0 0 1 8 .3 L14.7 4.2 H8 C6 4.2 4.5 5.2 3.8 6.8Z" fill="#e94235"/><path d="M14.7 4.2 A7.7 7.7 0 0 1 8 15.7 L11.3 10 C12 8.5 12 6 11 4.2Z" fill="#fcc934"/><circle cx="8" cy="8" r="3.6" fill="#fff"/><circle cx="8" cy="8" r="2.8" fill="#1a73e8"/></svg>
<div class="a" style="left:618.4px;top:548.8px;width:9.6px;height:9.6px;border-radius:50%;background:#1c9a9a;color:#fff;font-size:6.5px;line-height:9.6px;text-align:center;font-weight:bold">T</div>
<div class="a" style="left:614.4px;top:571.3px;width:4.5px;height:1.7px;border-radius:1px;background:#9a9a9a"></div>
<svg class="a" style="left:638.2px;top:552.8px" width="16" height="15" viewBox="0 0 16 15"><rect x="3" y="0.3" width="12.7" height="14.4" rx="1.5" fill="#2b7cd3"/><rect x="3" y="0.3" width="12.7" height="3.6" rx="1" fill="#41a5ee"/><rect x="3" y="7.5" width="12.7" height="3.6" fill="#185abd"/><rect x="3" y="11" width="12.7" height="3.7" rx="1" fill="#103f91"/><rect x="0.3" y="3.8" width="7.5" height="7.5" rx="1" fill="#185abd"/><path d="M1.6 5.5 L2.6 9.6 L3.8 6.5 L5 9.6 L6 5.5" stroke="#fff" stroke-width=".9" fill="none"/></svg>
<div class="a" style="left:643.5px;top:571.3px;width:4.7px;height:1.7px;border-radius:1px;background:#9a9a9a"></div>
<svg class="a" style="left:666.9px;top:552.5px" width="16" height="15" viewBox="0 0 16 15"><g fill="#a9aeb6"><circle cx="8" cy="7.5" r="5.5"/><rect x="6.5" y="0.3" width="3" height="3" rx=".6"/><rect x="6.5" y="11.7" width="3" height="3" rx=".6"/><rect x="6.5" y="0.3" width="3" height="3" rx=".6" transform="rotate(60 8 7.5)"/><rect x="6.5" y="0.3" width="3" height="3" rx=".6" transform="rotate(120 8 7.5)"/><rect x="6.5" y="0.3" width="3" height="3" rx=".6" transform="rotate(240 8 7.5)"/><rect x="6.5" y="0.3" width="3" height="3" rx=".6" transform="rotate(300 8 7.5)"/></g><circle cx="8" cy="7.5" r="3" fill="#2a5db0"/><circle cx="8" cy="7.5" r="1.8" fill="#3d7be0"/></svg>
<div class="a" style="left:672.8px;top:571.3px;width:4.7px;height:1.7px;border-radius:1px;background:#9a9a9a"></div>
<svg class="a" style="left:696.8px;top:552px" width="17" height="17" viewBox="0 0 17 17"><path d="M8.5 1.2 C12.5 1.2 15.6 4.3 15.6 8.3 C15.6 12.3 12.5 15.4 8.5 15.4 C7.2 15.4 6 15.1 5 14.5 L1.3 15.8 L2.5 12.3 C1.8 11.1 1.4 9.8 1.4 8.3 C1.4 4.3 4.5 1.2 8.5 1.2Z" stroke="#3fcf5a" stroke-width="1.6" fill="none"/><path d="M5.8 5.5 C6.2 5 6.8 5.2 7 5.7 L7.5 7 C7.6 7.4 7.3 7.7 7.1 8 C7.6 9 8.5 9.8 9.5 10.3 C9.8 10 10.1 9.7 10.5 9.8 L11.7 10.3 C12.1 10.5 12.2 11 11.8 11.4 C11 12.2 9.8 12.2 8.5 11.5 C6.8 10.5 5.3 8.8 5.2 7.3 C5.1 6.5 5.4 5.9 5.8 5.5Z" fill="#3fcf5a"/></svg>
<div class="a nw" style="left:701.5px;top:549.9px;width:17.5px;height:8.4px;border-radius:4.2px;background:#6cc6f0;color:#0f2a44;font-size:7.3px;line-height:8.4px;text-align:center;font-weight:bold;letter-spacing:-0.3px">99+</div>
<div class="a" style="left:702px;top:571.3px;width:4.8px;height:1.7px;border-radius:1px;background:#9a9a9a"></div>
<div class="a" style="left:722.6px;top:546px;width:22.8px;height:30px;border-radius:3px;background:#252525"></div>
<div class="a" style="left:725.5px;top:552.2px;width:16.4px;height:15.8px;border-radius:48%;background:#1b5cf2"></div>
<div class="a nw" style="left:725.5px;top:557.5px;width:16.4px;text-align:center;font-size:4px;line-height:5px;color:#dfe8ff;font-weight:bold">zoom</div>
<div class="a" style="left:728.4px;top:571.2px;width:10.6px;height:1.7px;border-radius:1px;background:#d0d8e8"></div>
<svg class="a" style="left:879px;top:557px" width="9" height="6" viewBox="0 0 9 6"><path d="M1 5 L4.5 1.5 L8 5" stroke="#e6e6e6" stroke-width="1.2" fill="none"/></svg>
<svg class="a" style="left:900px;top:552.5px" width="10" height="15" viewBox="0 0 10 15"><rect x="2.8" y="0.8" width="4.4" height="8" rx="2.2" fill="#5fa9b8"/><path d="M1.2 6 C1.2 9 3 10.6 5 10.6 C7 10.6 8.8 9 8.8 6 M5 10.6 V13.5" stroke="#5fa9b8" stroke-width="1.3" fill="none"/></svg>
<svg class="a" style="left:920px;top:554px" width="12" height="10" viewBox="0 0 12 10"><path d="M.8 3.5 C4 .5 8 .5 11.2 3.5 M2.5 5.3 C4.5 3.3 7.5 3.3 9.5 5.3 M4.2 7 C5.2 6 6.8 6 7.8 7" stroke="#e6e6e6" stroke-width="1.1" fill="none"/><circle cx="6" cy="8.8" r=".9" fill="#e6e6e6"/></svg>
<svg class="a" style="left:936px;top:553.5px" width="12" height="11" viewBox="0 0 12 11"><path d="M1 3.8 H3 L6 1 V10 L3 7.2 H1Z" fill="#e6e6e6"/><path d="M7.8 3.5 C8.6 4.3 8.6 6.7 7.8 7.5 M9.5 2 C11 3.5 11 7.5 9.5 9" stroke="#e6e6e6" stroke-width="1" fill="none"/></svg>
<svg class="a" style="left:951.5px;top:555px" width="13" height="9" viewBox="0 0 13 9"><rect x=".6" y=".8" width="10.5" height="7.4" rx="1.5" stroke="#e6e6e6" stroke-width="1.1" fill="none"/><rect x="2" y="2.2" width="5" height="4.6" fill="#e6e6e6"/><rect x="11.5" y="3" width="1.2" height="3" fill="#e6e6e6"/></svg>
<div class="a nw" style="left:960px;top:550px;width:51.5px;text-align:right;font-size:9px;line-height:10px;color:#ececec;letter-spacing:-0.5px">3:25 PM</div>
<div class="a nw" style="left:960px;top:559.5px;width:51.5px;text-align:right;font-size:9px;line-height:10px;color:#ececec;letter-spacing:-0.3px">8/29/2025</div>
<div class="a" style="left:13.5px;top:471.5px;width:21px;height:21px;border-radius:50%;background:#2a2d2e"></div>
<svg class="a" style="left:18px;top:476px" width="12" height="12" viewBox="0 0 12 12"><rect x="4.6" y="1.3" width="2.8" height="9" rx="1.4" transform="rotate(45 6 5.8)" stroke="#2fae78" stroke-width="1" fill="none"/><path d="M2.5 10.8 H9" stroke="#2a8a60" stroke-width=".7"/></svg>
<svg class="a" style="left:676px;top:486.5px" width="20" height="18" viewBox="0 0 20 18"><path d="M1 1.3 C7 .3 13 .3 19 1.3 V9 C19 13.5 15 16.5 10 17.3 C5 16.5 1 13.5 1 9Z" fill="#243152" stroke="#8a90a0" stroke-width=".8"/><rect x="2.5" y="2.5" width="15" height="3.2" fill="#eef0f4"/><circle cx="5" cy="4.1" r=".9" fill="#333a4a"/><circle cx="8.3" cy="4.1" r=".9" fill="#333a4a"/><circle cx="11.7" cy="4.1" r=".9" fill="#333a4a"/><circle cx="15" cy="4.1" r=".9" fill="#333a4a"/><rect x="5" y="7.3" width="4.5" height="5.2" fill="#e8eef6"/><rect x="10.5" y="7.3" width="4.5" height="5.2" fill="#dfe8f2"/><path d="M6 14.5 C8 15.5 12 15.5 14 14.5" stroke="#3a4a80" stroke-width="1"/></svg>
<!-- panel -->
<div id="panel" class="a" style="left:767px;top:33px;width:255px;height:508px;background:#fff;border-radius:6px;overflow:hidden">
<div class="a" style="left:0;top:0;width:255px;height:31px;background:#eef1f5"></div>
<div class="a nw" style="left:76.5px;top:11.22px;font-size:8.6px;line-height:11px;font-weight:bold;color:#2e2e2e;letter-spacing:0px">Participants (54)</div>
<svg class="a" style="left:216px;top:11px" width="12" height="12" viewBox="0 0 12 12"><path d="M5 1.5 H2.5 C1.9 1.5 1.5 1.9 1.5 2.5 V9.5 C1.5 10.1 1.9 10.5 2.5 10.5 H9.5 C10.1 10.5 10.5 10.1 10.5 9.5 V7" stroke="#555" stroke-width="1.1" fill="none"/><path d="M7 1.5 H10.5 V5 M10.5 1.5 L5.5 6.5" stroke="#555" stroke-width="1.1" fill="none"/></svg>
<svg class="a" style="left:234.5px;top:12px" width="10" height="10" viewBox="0 0 10 10"><path d="M1 1 L9 9 M9 1 L1 9" stroke="#666" stroke-width="1"/></svg>
<div class="a" style="left:15.4px;top:38.4px;width:224.6px;height:21.3px;border:1px solid #c9cacc;border-radius:5px;background:#fff"></div>
<svg class="a" style="left:21px;top:44px" width="11" height="11" viewBox="0 0 11 11"><circle cx="4.8" cy="4.8" r="3.6" stroke="#666" stroke-width="1" fill="none"/><path d="M7.5 7.5 L10 10" stroke="#666" stroke-width="1.1"/></svg>
<div class="a nw" style="left:33.7px;top:43.79px;font-size:8.4px;line-height:10px;color:#8a8a8a">Find a participant</div>
<div class="a" style="left:3px;top:61px;width:246px;height:407px;background:#fdf2ef"></div>
<div class="a" style="left:244.5px;top:61px;width:6px;height:408px;background:#f3f1f3"></div>
<div class="a" style="left:245px;top:352px;width:5px;height:117px;background:#a9a9ab;border-radius:3px"></div>
<div class="a" style="left:17px;top:65.30px;width:18px;height:17.5px;border-radius:5px;background:#1fa38b;color:#fff;font-size:8.5px;font-weight:bold;line-height:19px;text-align:center">2</div>
<div class="a nw" style="left:42.9px;top:70.49px;font-size:8.4px;line-height:10px;color:#464646;letter-spacing:-0.08px">2021BAD166 (Guest)</div>
<svg class="a" style="left:208px;top:68.30px" width="12" height="12" viewBox="0 0 12 12"><rect x="4.2" y="0.8" width="3.6" height="6.4" rx="1.8" fill="none" stroke="#c87070" stroke-width="1"/><path d="M2.6 5.4 C2.6 7.8 4.1 9 6 9 C7.9 9 9.4 7.8 9.4 5.4 M6 9 V11" stroke="#cf7474" stroke-width="1" fill="none"/><path d="M10.5 0.8 L1.2 11.2" stroke="#ec8088" stroke-width="1.2"/></svg>
<svg class="a" style="left:223.5px;top:68.30px" width="13" height="12" viewBox="0 0 13 12"><path d="M1.2 8.5 V3.6 C1.2 3 1.6 2.6 2.2 2.6 H8.4" stroke="#c88080" stroke-width="1" fill="none"/><path d="M2.2 2.6 H8.6 C9.2 2.6 9.5 3 9.5 3.5" stroke="#9a5a5a" stroke-width="1.1" fill="none"/><path d="M9.5 5.5 V8.7 C9.5 9.3 9.1 9.6 8.5 9.6 H4.2 L2.5 11 V9.6" stroke="#cf8080" stroke-width="1" fill="none"/><path d="M9.6 5 L12 3.2 V8 L9.6 6.6Z" fill="#d89090"/><path d="M11.8 .8 L1.8 11" stroke="#ec8088" stroke-width="1.1"/></svg>
<div class="a" style="left:17px;top:92.50px;width:18px;height:17.5px;border-radius:5px;background:#c9362c;color:#fff;font-size:8.5px;font-weight:bold;line-height:19px;text-align:center">2</div>
<div class="a nw" style="left:42.9px;top:97.69px;font-size:8.4px;line-height:10px;color:#464646;letter-spacing:-0.08px">2021bad173 (Guest)</div>
<svg class="a" style="left:208px;top:95.50px" width="12" height="12" viewBox="0 0 12 12"><rect x="4.2" y="0.8" width="3.6" height="6.4" rx="1.8" fill="none" stroke="#c87070" stroke-width="1"/><path d="M2.6 5.4 C2.6 7.8 4.1 9 6 9 C7.9 9 9.4 7.8 9.4 5.4 M6 9 V11" stroke="#cf7474" stroke-width="1" fill="none"/><path d="M10.5 0.8 L1.2 11.2" stroke="#ec8088" stroke-width="1.2"/></svg>
<svg class="a" style="left:223.5px;top:95.50px" width="13" height="12" viewBox="0 0 13 12"><path d="M1.2 8.5 V3.6 C1.2 3 1.6 2.6 2.2 2.6 H8.4" stroke="#c88080" stroke-width="1" fill="none"/><path d="M2.2 2.6 H8.6 C9.2 2.6 9.5 3 9.5 3.5" stroke="#9a5a5a" stroke-width="1.1" fill="none"/><path d="M9.5 5.5 V8.7 C9.5 9.3 9.1 9.6 8.5 9.6 H4.2 L2.5 11 V9.6" stroke="#cf8080" stroke-width="1" fill="none"/><path d="M9.6 5 L12 3.2 V8 L9.6 6.6Z" fill="#d89090"/><path d="M11.8 .8 L1.8 11" stroke="#ec8088" stroke-width="1.1"/></svg>
<div class="a" style="left:17px;top:119.70px;width:18px;height:17.5px;border-radius:5px;background:#f0a11e;color:#fff;font-size:8.5px;font-weight:bold;line-height:19px;text-align:center">22</div>
<div class="a nw" style="left:42.9px;top:124.89px;font-size:8.4px;line-height:10px;color:#464646;letter-spacing:-0.08px">2021bad190, 2021bad276 (Guest)</div>
<svg class="a" style="left:208px;top:122.70px" width="12" height="12" viewBox="0 0 12 12"><rect x="4.2" y="0.8" width="3.6" height="6.4" rx="1.8" fill="none" stroke="#c87070" stroke-width="1"/><path d="M2.6 5.4 C2.6 7.8 4.1 9 6 9 C7.9 9 9.4 7.8 9.4 5.4 M6 9 V11" stroke="#cf7474" stroke-width="1" fill="none"/><path d="M10.5 0.8 L1.2 11.2" stroke="#ec8088" stroke-width="1.2"/></svg>
<svg class="a" style="left:223.5px;top:122.70px" width="13" height="12" viewBox="0 0 13 12"><path d="M1.2 8.5 V3.6 C1.2 3 1.6 2.6 2.2 2.6 H8.4" stroke="#c88080" stroke-width="1" fill="none"/><path d="M2.2 2.6 H8.6 C9.2 2.6 9.5 3 9.5 3.5" stroke="#9a5a5a" stroke-width="1.1" fill="none"/><path d="M9.5 5.5 V8.7 C9.5 9.3 9.1 9.6 8.5 9.6 H4.2 L2.5 11 V9.6" stroke="#cf8080" stroke-width="1" fill="none"/><path d="M9.6 5 L12 3.2 V8 L9.6 6.6Z" fill="#d89090"/><path d="M11.8 .8 L1.8 11" stroke="#ec8088" stroke-width="1.1"/></svg>
<div class="a" style="left:17px;top:146.90px;width:18px;height:17.5px;border-radius:5px;background:#c9362c;color:#fff;font-size:8.5px;font-weight:bold;line-height:19px;text-align:center">2</div>
<div class="a nw" style="left:42.9px;top:152.09px;font-size:8.4px;line-height:10px;color:#464646;letter-spacing:-0.08px">2021bad209 (Guest)</div>
<svg class="a" style="left:208px;top:149.90px" width="12" height="12" viewBox="0 0 12 12"><rect x="4.2" y="0.8" width="3.6" height="6.4" rx="1.8" fill="none" stroke="#c87070" stroke-width="1"/><path d="M2.6 5.4 C2.6 7.8 4.1 9 6 9 C7.9 9 9.4 7.8 9.4 5.4 M6 9 V11" stroke="#cf7474" stroke-width="1" fill="none"/><path d="M10.5 0.8 L1.2 11.2" stroke="#ec8088" stroke-width="1.2"/></svg>
<svg class="a" style="left:223.5px;top:149.90px" width="13" height="12" viewBox="0 0 13 12"><path d="M1.2 8.5 V3.6 C1.2 3 1.6 2.6 2.2 2.6 H8.4" stroke="#c88080" stroke-width="1" fill="none"/><path d="M2.2 2.6 H8.6 C9.2 2.6 9.5 3 9.5 3.5" stroke="#9a5a5a" stroke-width="1.1" fill="none"/><path d="M9.5 5.5 V8.7 C9.5 9.3 9.1 9.6 8.5 9.6 H4.2 L2.5 11 V9.6" stroke="#cf8080" stroke-width="1" fill="none"/><path d="M9.6 5 L12 3.2 V8 L9.6 6.6Z" fill="#d89090"/><path d="M11.8 .8 L1.8 11" stroke="#ec8088" stroke-width="1.1"/></svg>
<div class="a" style="left:17px;top:174.10px;width:18px;height:17.5px;border-radius:5px;background:#33475b;color:#fff;font-size:8.5px;font-weight:bold;line-height:19px;text-align:center">2,</div>
<div class="a nw" style="left:42.9px;top:179.29px;font-size:8.4px;line-height:10px;color:#464646;letter-spacing:-0.08px">2021bad244 , 2021bad185 (Guest)</div>
<svg class="a" style="left:208px;top:177.10px" width="12" height="12" viewBox="0 0 12 12"><rect x="4.2" y="0.8" width="3.6" height="6.4" rx="1.8" fill="none" stroke="#c87070" stroke-width="1"/><path d="M2.6 5.4 C2.6 7.8 4.1 9 6 9 C7.9 9 9.4 7.8 9.4 5.4 M6 9 V11" stroke="#cf7474" stroke-width="1" fill="none"/><path d="M10.5 0.8 L1.2 11.2" stroke="#ec8088" stroke-width="1.2"/></svg>
<svg class="a" style="left:223.5px;top:177.10px" width="13" height="12" viewBox="0 0 13 12"><path d="M1.2 8.5 V3.6 C1.2 3 1.6 2.6 2.2 2.6 H8.4" stroke="#c88080" stroke-width="1" fill="none"/><path d="M2.2 2.6 H8.6 C9.2 2.6 9.5 3 9.5 3.5" stroke="#9a5a5a" stroke-width="1.1" fill="none"/><path d="M9.5 5.5 V8.7 C9.5 9.3 9.1 9.6 8.5 9.6 H4.2 L2.5 11 V9.6" stroke="#cf8080" stroke-width="1" fill="none"/><path d="M9.6 5 L12 3.2 V8 L9.6 6.6Z" fill="#d89090"/><path d="M11.8 .8 L1.8 11" stroke="#ec8088" stroke-width="1.1"/></svg>
<div class="a" style="left:17px;top:201.30px;width:18px;height:17.5px;border-radius:5px;background:#33475b;color:#fff;font-size:8.5px;font-weight:bold;line-height:19px;text-align:center">2</div>
<div class="a nw" style="left:42.9px;top:206.49px;font-size:8.4px;line-height:10px;color:#464646;letter-spacing:-0.08px">2021BAD268 (Guest)</div>
<svg class="a" style="left:208px;top:204.30px" width="12" height="12" viewBox="0 0 12 12"><rect x="4.2" y="0.8" width="3.6" height="6.4" rx="1.8" fill="none" stroke="#c87070" stroke-width="1"/><path d="M2.6 5.4 C2.6 7.8 4.1 9 6 9 C7.9 9 9.4 7.8 9.4 5.4 M6 9 V11" stroke="#cf7474" stroke-width="1" fill="none"/><path d="M10.5 0.8 L1.2 11.2" stroke="#ec8088" stroke-width="1.2"/></svg>
<svg class="a" style="left:223.5px;top:204.30px" width="13" height="12" viewBox="0 0 13 12"><path d="M1.2 8.5 V3.6 C1.2 3 1.6 2.6 2.2 2.6 H8.4" stroke="#c88080" stroke-width="1" fill="none"/><path d="M2.2 2.6 H8.6 C9.2 2.6 9.5 3 9.5 3.5" stroke="#9a5a5a" stroke-width="1.1" fill="none"/><path d="M9.5 5.5 V8.7 C9.5 9.3 9.1 9.6 8.5 9.6 H4.2 L2.5 11 V9.6" stroke="#cf8080" stroke-width="1" fill="none"/><path d="M9.6 5 L12 3.2 V8 L9.6 6.6Z" fill="#d89090"/><path d="M11.8 .8 L1.8 11" stroke="#ec8088" stroke-width="1.1"/></svg>
<div class="a" style="left:17px;top:228.50px;width:18px;height:17.5px;border-radius:5px;background:#8d44ad;color:#fff;font-size:8.5px;font-weight:bold;line-height:19px;text-align:center">2</div>
<div class="a nw" style="left:42.9px;top:233.69px;font-size:8.4px;line-height:10px;color:#464646;letter-spacing:-0.08px">2021bad294 (Guest)</div>
<svg class="a" style="left:208px;top:231.50px" width="12" height="12" viewBox="0 0 12 12"><rect x="4.2" y="0.8" width="3.6" height="6.4" rx="1.8" fill="none" stroke="#c87070" stroke-width="1"/><path d="M2.6 5.4 C2.6 7.8 4.1 9 6 9 C7.9 9 9.4 7.8 9.4 5.4 M6 9 V11" stroke="#cf7474" stroke-width="1" fill="none"/><path d="M10.5 0.8 L1.2 11.2" stroke="#ec8088" stroke-width="1.2"/></svg>
<svg class="a" style="left:223.5px;top:231.50px" width="13" height="12" viewBox="0 0 13 12"><path d="M1.2 8.5 V3.6 C1.2 3 1.6 2.6 2.2 2.6 H8.4" stroke="#c88080" stroke-width="1" fill="none"/><path d="M2.2 2.6 H8.6 C9.2 2.6 9.5 3 9.5 3.5" stroke="#9a5a5a" stroke-width="1.1" fill="none"/><path d="M9.5 5.5 V8.7 C9.5 9.3 9.1 9.6 8.5 9.6 H4.2 L2.5 11 V9.6" stroke="#cf8080" stroke-width="1" fill="none"/><path d="M9.6 5 L12 3.2 V8 L9.6 6.6Z" fill="#d89090"/><path d="M11.8 .8 L1.8 11" stroke="#ec8088" stroke-width="1.1"/></svg>
<div class="a" style="left:17px;top:255.70px;width:18px;height:17.5px;border-radius:5px;background:#1fa38b;color:#fff;font-size:8.5px;font-weight:bold;line-height:19px;text-align:center">2</div>
<div class="a nw" style="left:42.9px;top:260.89px;font-size:8.4px;line-height:10px;color:#464646;letter-spacing:-0.08px">2021bad311 (Guest)</div>
<svg class="a" style="left:208px;top:258.70px" width="12" height="12" viewBox="0 0 12 12"><rect x="4.2" y="0.8" width="3.6" height="6.4" rx="1.8" fill="none" stroke="#c87070" stroke-width="1"/><path d="M2.6 5.4 C2.6 7.8 4.1 9 6 9 C7.9 9 9.4 7.8 9.4 5.4 M6 9 V11" stroke="#cf7474" stroke-width="1" fill="none"/><path d="M10.5 0.8 L1.2 11.2" stroke="#ec8088" stroke-width="1.2"/></svg>
<svg class="a" style="left:223.5px;top:258.70px" width="13" height="12" viewBox="0 0 13 12"><path d="M1.2 8.5 V3.6 C1.2 3 1.6 2.6 2.2 2.6 H8.4" stroke="#c88080" stroke-width="1" fill="none"/><path d="M2.2 2.6 H8.6 C9.2 2.6 9.5 3 9.5 3.5" stroke="#9a5a5a" stroke-width="1.1" fill="none"/><path d="M9.5 5.5 V8.7 C9.5 9.3 9.1 9.6 8.5 9.6 H4.2 L2.5 11 V9.6" stroke="#cf8080" stroke-width="1" fill="none"/><path d="M9.6 5 L12 3.2 V8 L9.6 6.6Z" fill="#d89090"/><path d="M11.8 .8 L1.8 11" stroke="#ec8088" stroke-width="1.1"/></svg>
<div class="a" style="left:17px;top:282.90px;width:18px;height:17.5px;border-radius:5px;background:#c9362c;color:#fff;font-size:8.5px;font-weight:bold;line-height:19px;text-align:center">2</div>
<div class="a nw" style="left:42.9px;top:288.09px;font-size:8.4px;line-height:10px;color:#464646;letter-spacing:-0.08px">2021bad335 (Guest)</div>
<svg class="a" style="left:208px;top:285.90px" width="12" height="12" viewBox="0 0 12 12"><rect x="4.2" y="0.8" width="3.6" height="6.4" rx="1.8" fill="none" stroke="#c87070" stroke-width="1"/><path d="M2.6 5.4 C2.6 7.8 4.1 9 6 9 C7.9 9 9.4 7.8 9.4 5.4 M6 9 V11" stroke="#cf7474" stroke-width="1" fill="none"/><path d="M10.5 0.8 L1.2 11.2" stroke="#ec8088" stroke-width="1.2"/></svg>
<svg class="a" style="left:223.5px;top:285.90px" width="13" height="12" viewBox="0 0 13 12"><path d="M1.2 8.5 V3.6 C1.2 3 1.6 2.6 2.2 2.6 H8.4" stroke="#c88080" stroke-width="1" fill="none"/><path d="M2.2 2.6 H8.6 C9.2 2.6 9.5 3 9.5 3.5" stroke="#9a5a5a" stroke-width="1.1" fill="none"/><path d="M9.5 5.5 V8.7 C9.5 9.3 9.1 9.6 8.5 9.6 H4.2 L2.5 11 V9.6" stroke="#cf8080" stroke-width="1" fill="none"/><path d="M9.6 5 L12 3.2 V8 L9.6 6.6Z" fill="#d89090"/><path d="M11.8 .8 L1.8 11" stroke="#ec8088" stroke-width="1.1"/></svg>
<div class="a" style="left:17px;top:310.10px;width:18px;height:17.5px;border-radius:5px;background:#33475b;color:#fff;font-size:8.5px;font-weight:bold;line-height:19px;text-align:center">2</div>
<div class="a nw" style="left:42.9px;top:315.29px;font-size:8.4px;line-height:10px;color:#464646;letter-spacing:-0.08px">2021BAD341 (Guest)</div>
<svg class="a" style="left:208px;top:313.10px" width="12" height="12" viewBox="0 0 12 12"><rect x="4.2" y="0.8" width="3.6" height="6.4" rx="1.8" fill="none" stroke="#c87070" stroke-width="1"/><path d="M2.6 5.4 C2.6 7.8 4.1 9 6 9 C7.9 9 9.4 7.8 9.4 5.4 M6 9 V11" stroke="#cf7474" stroke-width="1" fill="none"/><path d="M10.5 0.8 L1.2 11.2" stroke="#ec8088" stroke-width="1.2"/></svg>
<svg class="a" style="left:223.5px;top:313.10px" width="13" height="12" viewBox="0 0 13 12"><path d="M1.2 8.5 V3.6 C1.2 3 1.6 2.6 2.2 2.6 H8.4" stroke="#c88080" stroke-width="1" fill="none"/><path d="M2.2 2.6 H8.6 C9.2 2.6 9.5 3 9.5 3.5" stroke="#9a5a5a" stroke-width="1.1" fill="none"/><path d="M9.5 5.5 V8.7 C9.5 9.3 9.1 9.6 8.5 9.6 H4.2 L2.5 11 V9.6" stroke="#cf8080" stroke-width="1" fill="none"/><path d="M9.6 5 L12 3.2 V8 L9.6 6.6Z" fill="#d89090"/><path d="M11.8 .8 L1.8 11" stroke="#ec8088" stroke-width="1.1"/></svg>
<div class="a" style="left:17px;top:337.30px;width:18px;height:17.5px;border-radius:5px;background:#28ad5e;color:#fff;font-size:8.5px;font-weight:bold;line-height:19px;text-align:center">2</div>
<div class="a nw" style="left:42.9px;top:342.49px;font-size:8.4px;line-height:10px;color:#464646;letter-spacing:-0.08px">2021BAD345 (Guest)</div>
<svg class="a" style="left:208px;top:340.30px" width="12" height="12" viewBox="0 0 12 12"><rect x="4.2" y="0.8" width="3.6" height="6.4" rx="1.8" fill="none" stroke="#c87070" stroke-width="1"/><path d="M2.6 5.4 C2.6 7.8 4.1 9 6 9 C7.9 9 9.4 7.8 9.4 5.4 M6 9 V11" stroke="#cf7474" stroke-width="1" fill="none"/><path d="M10.5 0.8 L1.2 11.2" stroke="#ec8088" stroke-width="1.2"/></svg>
<svg class="a" style="left:223.5px;top:340.30px" width="13" height="12" viewBox="0 0 13 12"><path d="M1.2 8.5 V3.6 C1.2 3 1.6 2.6 2.2 2.6 H8.4" stroke="#c88080" stroke-width="1" fill="none"/><path d="M2.2 2.6 H8.6 C9.2 2.6 9.5 3 9.5 3.5" stroke="#9a5a5a" stroke-width="1.1" fill="none"/><path d="M9.5 5.5 V8.7 C9.5 9.3 9.1 9.6 8.5 9.6 H4.2 L2.5 11 V9.6" stroke="#cf8080" stroke-width="1" fill="none"/><path d="M9.6 5 L12 3.2 V8 L9.6 6.6Z" fill="#d89090"/><path d="M11.8 .8 L1.8 11" stroke="#ec8088" stroke-width="1.1"/></svg>
<div class="a" style="left:17px;top:364.50px;width:18px;height:17.5px;border-radius:5px;background:#28ad5e;color:#fff;font-size:8.5px;font-weight:bold;line-height:19px;text-align:center">2</div>
<div class="a nw" style="left:42.9px;top:369.69px;font-size:8.4px;line-height:10px;color:#464646;letter-spacing:-0.08px">2021bad354 (Guest)</div>
<svg class="a" style="left:208px;top:367.50px" width="12" height="12" viewBox="0 0 12 12"><rect x="4.2" y="0.8" width="3.6" height="6.4" rx="1.8" fill="none" stroke="#c87070" stroke-width="1"/><path d="M2.6 5.4 C2.6 7.8 4.1 9 6 9 C7.9 9 9.4 7.8 9.4 5.4 M6 9 V11" stroke="#cf7474" stroke-width="1" fill="none"/><path d="M10.5 0.8 L1.2 11.2" stroke="#ec8088" stroke-width="1.2"/></svg>
<svg class="a" style="left:223.5px;top:367.50px" width="13" height="12" viewBox="0 0 13 12"><path d="M1.2 8.5 V3.6 C1.2 3 1.6 2.6 2.2 2.6 H8.4" stroke="#c88080" stroke-width="1" fill="none"/><path d="M2.2 2.6 H8.6 C9.2 2.6 9.5 3 9.5 3.5" stroke="#9a5a5a" stroke-width="1.1" fill="none"/><path d="M9.5 5.5 V8.7 C9.5 9.3 9.1 9.6 8.5 9.6 H4.2 L2.5 11 V9.6" stroke="#cf8080" stroke-width="1" fill="none"/><path d="M9.6 5 L12 3.2 V8 L9.6 6.6Z" fill="#d89090"/><path d="M11.8 .8 L1.8 11" stroke="#ec8088" stroke-width="1.1"/></svg>
<div class="a" style="left:17px;top:391.70px;width:18px;height:17.5px;border-radius:5px;background:#1fa38b;color:#fff;font-size:8.5px;font-weight:bold;line-height:19px;text-align:center">2</div>
<div class="a nw" style="left:42.9px;top:396.89px;font-size:8.4px;line-height:10px;color:#464646;letter-spacing:-0.08px">2021bad364 (Guest)</div>
<svg class="a" style="left:208px;top:394.70px" width="12" height="12" viewBox="0 0 12 12"><rect x="4.2" y="0.8" width="3.6" height="6.4" rx="1.8" fill="none" stroke="#c87070" stroke-width="1"/><path d="M2.6 5.4 C2.6 7.8 4.1 9 6 9 C7.9 9 9.4 7.8 9.4 5.4 M6 9 V11" stroke="#cf7474" stroke-width="1" fill="none"/><path d="M10.5 0.8 L1.2 11.2" stroke="#ec8088" stroke-width="1.2"/></svg>
<svg class="a" style="left:223.5px;top:394.70px" width="13" height="12" viewBox="0 0 13 12"><path d="M1.2 8.5 V3.6 C1.2 3 1.6 2.6 2.2 2.6 H8.4" stroke="#c88080" stroke-width="1" fill="none"/><path d="M2.2 2.6 H8.6 C9.2 2.6 9.5 3 9.5 3.5" stroke="#9a5a5a" stroke-width="1.1" fill="none"/><path d="M9.5 5.5 V8.7 C9.5 9.3 9.1 9.6 8.5 9.6 H4.2 L2.5 11 V9.6" stroke="#cf8080" stroke-width="1" fill="none"/><path d="M9.6 5 L12 3.2 V8 L9.6 6.6Z" fill="#d89090"/><path d="M11.8 .8 L1.8 11" stroke="#ec8088" stroke-width="1.1"/></svg>
<div class="a" style="left:17px;top:418.90px;width:18px;height:17.5px;border-radius:5px;background:#33475b;color:#fff;font-size:8.5px;font-weight:bold;line-height:19px;text-align:center">2,</div>
<div class="a nw" style="left:42.9px;top:424.09px;font-size:8.4px;line-height:10px;color:#464646;letter-spacing:-0.08px">2021bad371 ,2021bad058 (Guest)</div>
<svg class="a" style="left:208px;top:421.90px" width="12" height="12" viewBox="0 0 12 12"><rect x="4.2" y="0.8" width="3.6" height="6.4" rx="1.8" fill="none" stroke="#c87070" stroke-width="1"/><path d="M2.6 5.4 C2.6 7.8 4.1 9 6 9 C7.9 9 9.4 7.8 9.4 5.4 M6 9 V11" stroke="#cf7474" stroke-width="1" fill="none"/><path d="M10.5 0.8 L1.2 11.2" stroke="#ec8088" stroke-width="1.2"/></svg>
<svg class="a" style="left:223.5px;top:421.90px" width="13" height="12" viewBox="0 0 13 12"><path d="M1.2 8.5 V3.6 C1.2 3 1.6 2.6 2.2 2.6 H8.4" stroke="#c88080" stroke-width="1" fill="none"/><path d="M2.2 2.6 H8.6 C9.2 2.6 9.5 3 9.5 3.5" stroke="#9a5a5a" stroke-width="1.1" fill="none"/><path d="M9.5 5.5 V8.7 C9.5 9.3 9.1 9.6 8.5 9.6 H4.2 L2.5 11 V9.6" stroke="#cf8080" stroke-width="1" fill="none"/><path d="M9.6 5 L12 3.2 V8 L9.6 6.6Z" fill="#d89090"/><path d="M11.8 .8 L1.8 11" stroke="#ec8088" stroke-width="1.1"/></svg>
<div class="a" style="left:17px;top:446.10px;width:18px;height:17.5px;border-radius:5px;background:#d9560f;color:#fff;font-size:8.5px;font-weight:bold;line-height:19px;text-align:center">I</div>
<div class="a nw" style="left:42.9px;top:451.29px;font-size:8.4px;line-height:10px;color:#464646;letter-spacing:-0.08px">ip.Muraleetharan (Guest)</div>
<svg class="a" style="left:208px;top:449.10px" width="12" height="12" viewBox="0 0 12 12"><rect x="4.2" y="0.8" width="3.6" height="6.4" rx="1.8" fill="none" stroke="#c87070" stroke-width="1"/><path d="M2.6 5.4 C2.6 7.8 4.1 9 6 9 C7.9 9 9.4 7.8 9.4 5.4 M6 9 V11" stroke="#cf7474" stroke-width="1" fill="none"/><path d="M10.5 0.8 L1.2 11.2" stroke="#ec8088" stroke-width="1.2"/></svg>
<svg class="a" style="left:223.5px;top:449.10px" width="13" height="12" viewBox="0 0 13 12"><path d="M1.2 8.5 V3.6 C1.2 3 1.6 2.6 2.2 2.6 H8.4" stroke="#c88080" stroke-width="1" fill="none"/><path d="M2.2 2.6 H8.6 C9.2 2.6 9.5 3 9.5 3.5" stroke="#9a5a5a" stroke-width="1.1" fill="none"/><path d="M9.5 5.5 V8.7 C9.5 9.3 9.1 9.6 8.5 9.6 H4.2 L2.5 11 V9.6" stroke="#cf8080" stroke-width="1" fill="none"/><path d="M9.6 5 L12 3.2 V8 L9.6 6.6Z" fill="#d89090"/><path d="M11.8 .8 L1.8 11" stroke="#ec8088" stroke-width="1.1"/></svg>
<div class="a" style="left:40.6px;top:480.6px;width:35.199999999999996px;height:14.8px;border:1px solid #bdbdbd;border-radius:4px;background:#fff;color:#3a3a3a;font-size:8.4px;line-height:12.8px;text-align:center">Invite</div>
<div class="a" style="left:114px;top:480.6px;width:45.30000000000001px;height:14.8px;border:1px solid #bdbdbd;border-radius:4px;background:#fff;color:#3a3a3a;font-size:8.4px;line-height:12.8px;text-align:center">Mute all</div>
<div class="a" style="left:197.3px;top:480.6px;width:15.699999999999989px;height:14.8px;border:1px solid #bdbdbd;border-radius:4px;background:#fff;color:#3a3a3a;font-size:8.4px;line-height:12.8px;text-align:center"><svg style="position:absolute;left:3.2px;top:5.5px" width="9" height="3" viewBox="0 0 9 3"><circle cx="1.3" cy="1.5" r=".8" fill="#444"/><circle cx="4.5" cy="1.5" r=".8" fill="#444"/><circle cx="7.7" cy="1.5" r=".8" fill="#444"/></svg></div>
</div>
</body></html>
